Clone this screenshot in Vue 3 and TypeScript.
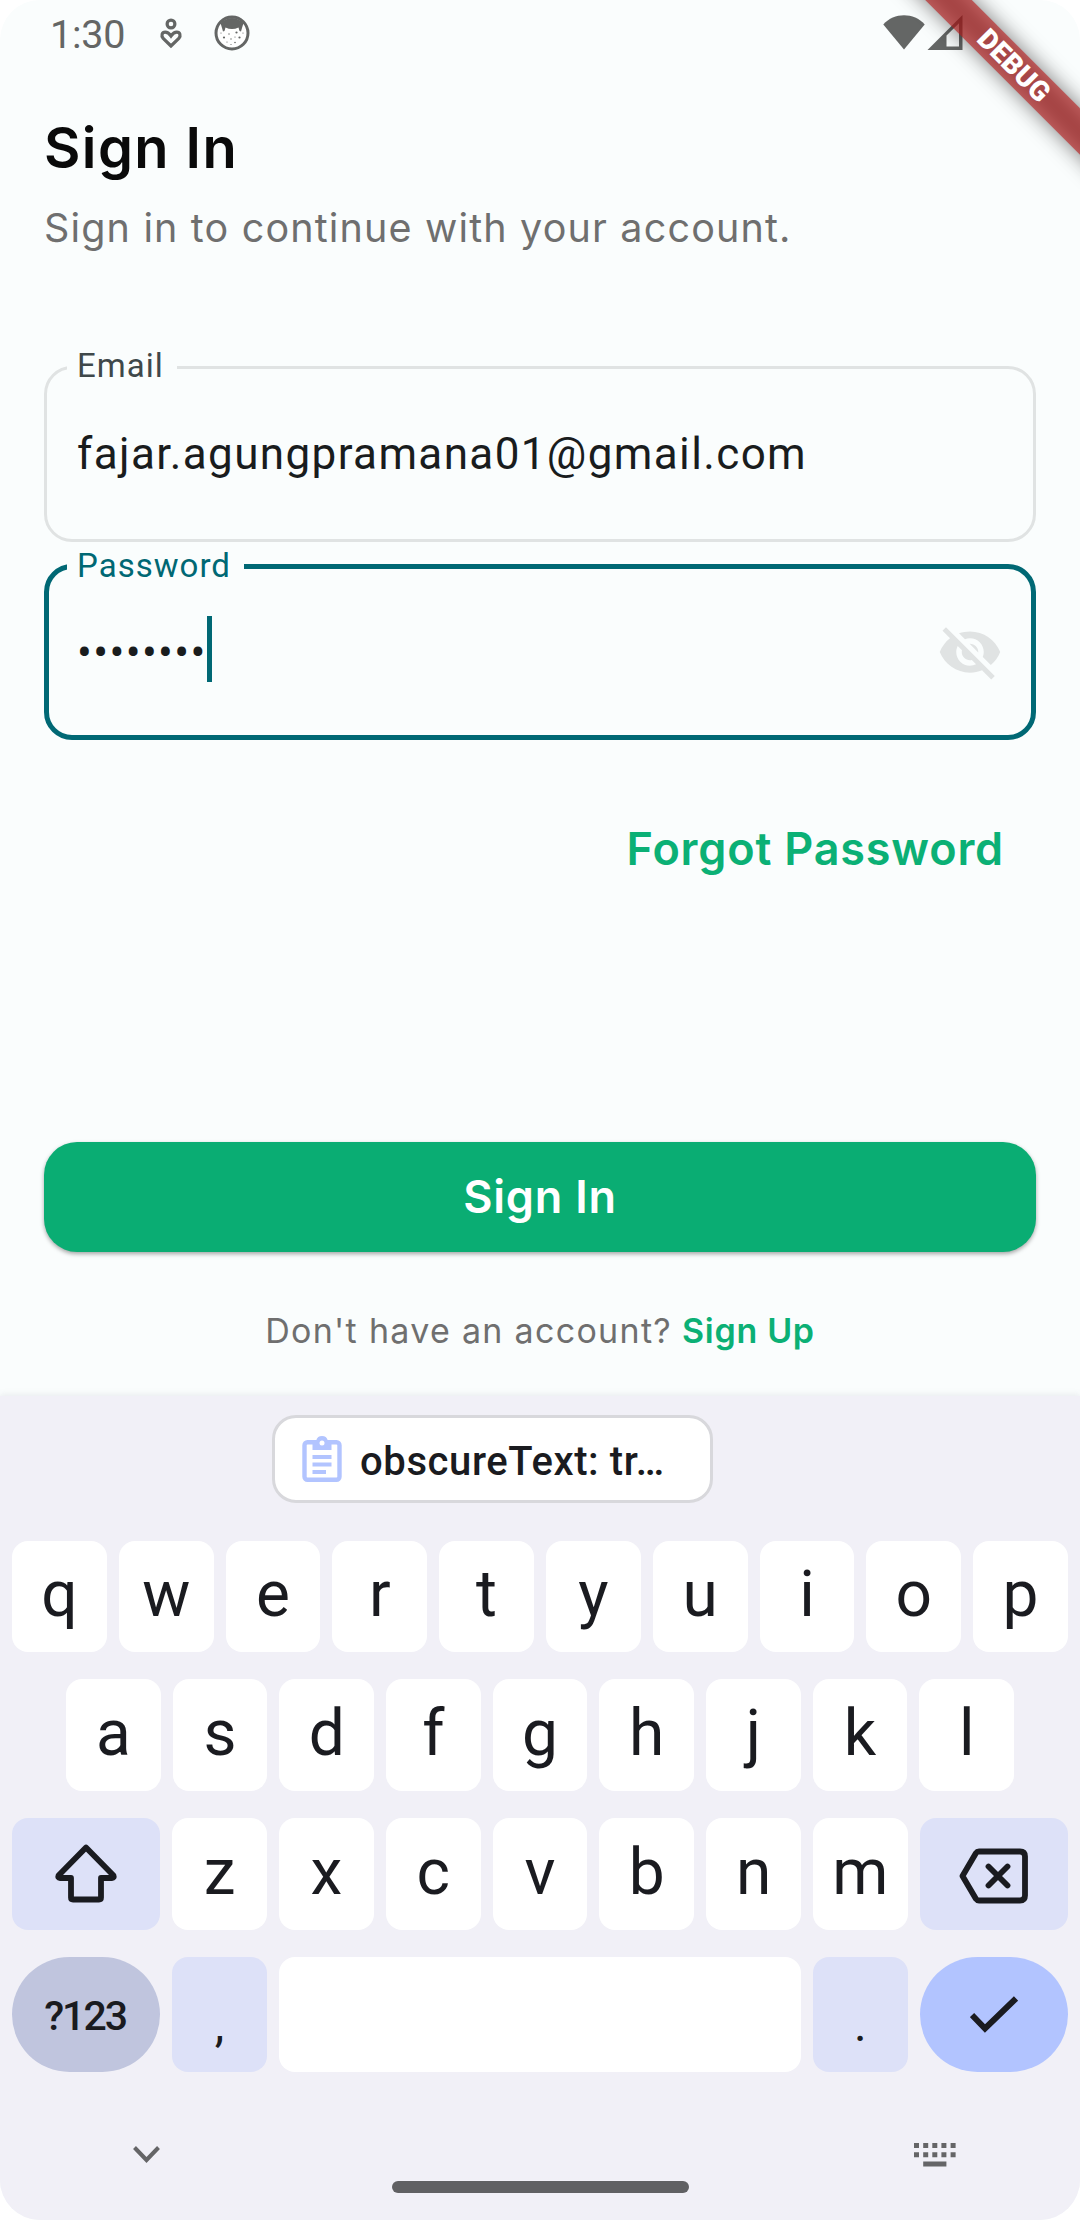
<script setup lang="ts">
const topRow = 'qwertyuiop'.split('')
const homeRow = 'asdfghjkl'.split('')
const bottomRow = 'zxcvbnm'.split('')
</script>

<template>
  <div class="screen">
    <header class="status">
      <span class="time">1:30</span>
      <svg class="status-heart" viewBox="0 0 24 36">
        <circle cx="12" cy="7" r="3.9" />
        <path d="M12 29 4.2 21.400C1.800 18.600 3 15.200 6.200 15.200c2.600 0 4.200 1.600 5.800 3.800 1.600-2.200 3.200-3.800 5.800-3.800 3.200 0 4.400 3.400 2 6.200z" />
      </svg>
      <svg class="status-cat" viewBox="0 0 36 36">
        <circle cx="18" cy="18" r="16" fill="#fff" stroke="#646665" stroke-width="3" />
        <path d="M6.500 8Q18-2 29.500 8L28 13 27 16.500 25.500 16 24.500 12.500Q18 15.500 11.500 12.500L10.500 16 9 16.500 8 13z" fill="#646665" />
        <g fill="#646665">
          <circle cx="10" cy="22.500" r="1.100" /><circle cx="15" cy="19" r=".7" /><circle cx="22.500" cy="17.500" r="1.100" />
          <circle cx="25.500" cy="22.500" r="1.100" /><circle cx="17" cy="24" r=".7" /><circle cx="21" cy="27.500" r=".8" />
          <circle cx="13" cy="27" r=".6" /><circle cx="17" cy="29.500" r=".6" /><circle cx="21" cy="22" r=".6" />
          <circle cx="7" cy="18" r=".6" /><circle cx="29" cy="18" r=".6" />
        </g>
      </svg>
      <svg class="status-net" viewBox="0 0 80 36">
        <path d="M21 35.500.3 10.500C11-1.800 31-1.800 41.700 10.500z" />
        <path fill-rule="evenodd" d="M44.500 36 79.500 1V36zM63.500 21.500V32.500H76V9.300z" />
      </svg>
    </header>

    <div class="banner">DEBUG</div>

    <main class="content">
      <h1>Sign In</h1>
      <p class="sub">Sign in to continue with your account.</p>

      <fieldset class="field">
        <legend>Email</legend>
        <div class="line"><span class="value">fajar.agungpramana01@gmail.com</span></div>
      </fieldset>
      <fieldset class="field focused">
        <legend>Password</legend>
        <div class="line">
          <span class="value masked">••••••••</span><i class="caret"></i>
          <svg class="eye" viewBox="0 0 24 24">
            <path d="M12 7c2.760 0 5 2.240 5 5 0 .650-.130 1.260-.360 1.830l2.920 2.920c1.510-1.260 2.700-2.890 3.430-4.750-1.730-4.390-6-7.500-11-7.500-1.400 0-2.740.250-3.980.700l2.160 2.160C10.740 7.130 11.350 7 12 7zM2 4.270l2.280 2.280.460.460C3.080 8.300 1.780 10.020 1 12c1.730 4.390 6 7.500 11 7.500 1.550 0 3.030-.300 4.380-.840l.420.420L19.730 22 21 20.730 3.270 3 2 4.270zM7.530 9.800l1.550 1.550c-.050.210-.080.430-.080.650 0 1.660 1.340 3 3 3 .220 0 .440-.030.650-.080l1.550 1.550c-.670.330-1.410.530-2.200.530-2.760 0-5-2.240-5-5 0-.790.200-1.530.530-2.200zm4.310-.780 3.150 3.150.020-.160c0-1.660-1.340-3-3-3l-.170.010z" />
          </svg>
        </div>
      </fieldset>

      <a class="forgot">Forgot Password</a>
      <button class="submit">Sign In</button>
      <p class="signup"><span>Don't have an account?</span><a>Sign Up</a></p>
    </main>

    <section class="keyboard">
      <div class="chip">
        <svg viewBox="0 0 40 48">
          <rect x="2.500" y="7.200" width="35" height="37.500" rx="3" fill="none" stroke="#b2c4ff" stroke-width="4.400" />
          <path fill="#b2c4ff" d="M10.500 5.500H14.200a6 6 0 0 1 11.600 0H29.500V15H10.500zM10.500 20H29.500V24H10.500zM10.500 27.500H29.500V31.500H10.500zM10.500 35H24V39H10.500z" />
          <circle cx="20" cy="8" r="2.500" fill="#fff" />
        </svg>
        <span>obscureText: tr…</span>
      </div>
      <div class="row first"><span v-for="k in topRow" :key="k" class="key">{{ k }}</span></div>
      <div class="row home"><span v-for="k in homeRow" :key="k" class="key">{{ k }}</span></div>
      <div class="row">
        <span class="key wide tint">
          <svg class="shift" viewBox="0 0 64 60"><path d="M32 4.500 4.500 32.500Q3.500 35 6 35H17V54.500Q17 56.500 19 56.500H45Q47 56.500 47 54.500V35H58Q60.500 35 59.500 32.500z" /></svg>
        </span>
        <span v-for="k in bottomRow" :key="k" class="key">{{ k }}</span>
        <span class="key wide tint">
          <svg class="bksp" viewBox="0 0 70 56"><path d="M20 3.500H61Q66 3.500 66 8.500V47.500Q66 52.500 61 52.500H20Q18 52.500 17 51L3.500 28 17 5Q18 3.500 20 3.500zM29.500 18.500 48.500 37.500M48.500 18.500 29.500 37.500" /></svg>
        </span>
      </div>
      <div class="row last">
        <span class="key wide sym">?123</span>
        <span class="key tint punct">,</span>
        <span class="key space"></span>
        <span class="key tint punct">.</span>
        <span class="key wide enter"><svg class="check" viewBox="0 0 48 38"><path d="M2 19 15 32.500 46 2.500" /></svg></span>
      </div>
      <div class="nav">
        <svg class="down" viewBox="0 0 28 17"><path d="M1.500 1.500 13.500 14 25.500 1.500" /></svg>
        <svg class="kb" viewBox="0 0 42 24"><path d="M0 0h5v5H0zM9.200 0h5v5h-5zM18.300 0h5v5h-5zM27.400 0h5v5h-5zM36.600 0h5v5h-5zM0 9.200h5v5H0zM9.200 9.200h5v5h-5zM18.300 9.200h5v5h-5zM27.400 9.200h5v5h-5zM36.600 9.200h5v5h-5zM9.200 18.500h23.200v5H9.200z" /></svg>
      </div>
      <div class="handle"></div>
    </section>
  </div>
</template>

<style>
body { margin: 0; background: #fff; }
</style>

<style scoped>
.screen {
  position: relative;
  display: flex;
  flex-direction: column;
  width: 1080px;
  height: 2220px;
  overflow: hidden;
  border-radius: 40px;
  background: #fafdfd;
  font-family: Roboto, sans-serif;
}
.status {
  display: flex;
  align-items: flex-start;
  height: 66px;
  padding: 0 117px 0 50px;
  color: #646665;
}
.time { width: 109px; font-size: 39.5px; line-height: 69px; letter-spacing: -0.2px; }
.status-heart { width: 24px; height: 36px; margin-top: 17px; fill: none; stroke: #646665; stroke-width: 3.2; }
.status-cat { width: 36px; height: 36px; margin: 15px 0 0 31px; }
.status-net { width: 80px; height: 36px; margin: 14px 0 0 auto; fill: #646665; }
.banner {
  position: absolute;
  top: 49px;
  left: 864px;
  width: 300px;
  height: 33px;
  transform: rotate(45deg);
  text-align: center;
  color: #fff;
  font-size: 28px;
  font-weight: 900;
  line-height: 33px;
}
.banner::before, .banner::after { content: ''; position: absolute; inset: 0; z-index: -1; }
.banner::before { background: rgba(0, 0, 0, .5); filter: blur(10.9px); }
.banner::after { background: rgba(183, 28, 28, .63); }
.content { display: flex; flex-direction: column; height: 1330px; padding: 0 44px; font-family: Inter, sans-serif; }
h1 { margin: 42px 0 0; font-size: 56px; font-weight: 600; line-height: 80px; letter-spacing: 1.4px; color: #0a0a0a; }
.sub { margin: 10px 0 0; font-size: 39.5px; line-height: 60px; letter-spacing: 1.16px; color: #6f6f6f; }
.field {
  box-sizing: border-box;
  height: 196px;
  margin: 88px 0 0;
  padding: 0 30px;
  border: 3px solid #e0e3e3;
  border-radius: 28px;
  font-family: Roboto, sans-serif;
}
.field legend {
  margin-left: -10px;
  padding: 0 13px 3px 10px;
  font-size: 33px;
  line-height: 40px;
  letter-spacing: 1.03px;
  color: #3f484a;
}
.line { display: flex; align-items: flex-start; padding-top: 32px; }
.value { font-size: 44px; line-height: 66px; letter-spacing: 1.375px; color: #191c1d; }
.focused { height: 195px; margin-top: 3px; padding: 0 28px; border: 5px solid #006874; }
.focused legend { padding-top: 1px; padding-bottom: 2px; color: #006874; }
.focused .line { padding-top: 28px; }
.masked { padding-top: 4px; }
.caret { width: 5.5px; height: 66px; background: #006874; }
.eye { width: 66px; height: 66px; margin: 3px 0 0 auto; fill: #e0e3e3; }
.forgot {
  align-self: flex-end;
  margin: 79px 32px 0 0;
  font-size: 45px;
  font-weight: 600;
  line-height: 60px;
  letter-spacing: .8px;
  color: #0bb075;
}
.submit {
  height: 110px;
  margin: 263px 0 0;
  padding: 0;
  border: 0;
  border-radius: 33px;
  background: #0aad73;
  box-shadow: 0 2px 4px rgba(0, 0, 0, .35);
  color: #fff;
  font: 600 45px/104px Inter, sans-serif;
  letter-spacing: .8px;
}
.signup {
  display: flex;
  justify-content: center;
  margin: 52px 0 0;
  font-size: 34px;
  line-height: 54px;
  letter-spacing: 1.3px;
  color: #6f6f6f;
}
.signup a { margin-left: 10px; font-weight: 600; letter-spacing: .7px; color: #0bb075; }
.keyboard {
  display: flex;
  flex: 1;
  flex-direction: column;
  background: #f1f0f7;
  box-shadow: 0 -2px 6px rgba(100, 100, 120, .1);
  color: #1a1b20;
}
.chip {
  box-sizing: border-box;
  display: flex;
  align-items: center;
  width: 441px;
  height: 88px;
  margin: 19px 0 0 272px;
  padding-left: 27px;
  border: 3px solid #d8d8dc;
  border-radius: 24px;
  background: #fff;
  font-size: 40px;
  font-weight: 500;
  letter-spacing: .6px;
}
.chip svg { width: 40px; height: 48px; margin-right: 18px; }
.chip span { padding-top: 4px; }
.row { display: flex; gap: 12px; height: 112px; margin-top: 27px; padding: 0 12px; }
.first { height: 111px; margin-top: 38px; }
.home { padding: 0 66px; }
.last { height: 115px; }
.key {
  box-sizing: border-box;
  display: flex;
  flex: 1 1 0;
  align-items: center;
  justify-content: center;
  padding-bottom: 4px;
  border-radius: 16px;
  background: #fff;
  font-size: 64px;
}
.wide { flex: 0 0 148.2px; padding-bottom: 0; }
.tint { background: #dde1f8; }
.space { flex: 0 0 522px; }
.sym { padding: 2px 2px 0 0; border-radius: 58px; background: #c0c5de; font-size: 41px; font-weight: 500; letter-spacing: -2px; }
.enter { border-radius: 58px; background: #b2c4ff; }
.punct { padding: 20px 0 0; font-size: 48px; }
.key svg { fill: none; stroke: #1a1b20; stroke-width: 5.8; stroke-linecap: round; stroke-linejoin: round; }
.shift { width: 64px; height: 60px; margin-top: -2px; }
.bksp { width: 70px; height: 56px; margin-top: 4px; }
.key .check { width: 48px; height: 38px; stroke-width: 6; stroke-linecap: butt; stroke-linejoin: miter; }
.nav {
  display: flex;
  align-items: flex-start;
  justify-content: space-between;
  height: 24px;
  margin-top: 71px;
  padding: 0 124px 0 133px;
}
.down { width: 28px; height: 17px; margin-top: 3px; fill: none; stroke: #656567; stroke-width: 4; }
.kb { width: 42px; height: 24px; fill: #656567; }
.handle { width: 297px; height: 12px; margin: 14px auto 0; border-radius: 6px; background: #606063; }
</style>
